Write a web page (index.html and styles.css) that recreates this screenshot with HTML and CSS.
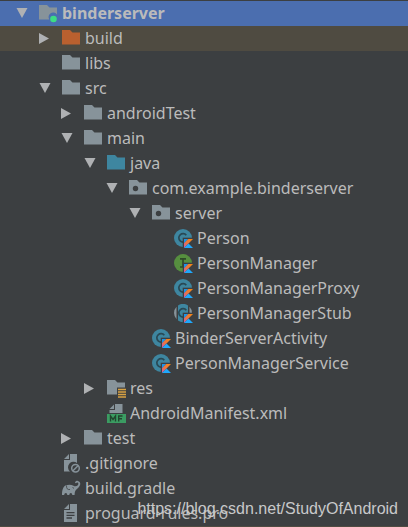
FILE: index.html
```html
<!DOCTYPE html>
<html lang="en">
<head>
    <meta charset="utf-8">
    <title>binderserver</title>
    <meta name="viewport" content="width=device-width, initial-scale=1.0">
    <link rel="stylesheet" href="styles.css">
</head>

<body>
    <!-- Shared icons -->
    <svg class="sprite" aria-hidden="true">
        <defs>
            <linearGradient id="kt-orange" x1="0" y1="1" x2="1" y2="0">
                <stop offset="0" stop-color="#c757bc"/>
                <stop offset="0.4" stop-color="#e8744b"/>
                <stop offset="1" stop-color="#f88909"/>
            </linearGradient>
        </defs>
        <symbol id="down" viewBox="0 0 12 12"><path d="M0.5 0H11.5L6 10Z" fill="#afb1b3"/></symbol>
        <symbol id="right" viewBox="0 0 12 12"><path d="M0 0L10 5.5L0 11Z" fill="#afb1b3"/></symbol>
        <symbol id="folder" viewBox="0 0 19 19"><path d="M0 1H8L10.5 3.5H18V15.5H0Z" fill="currentColor"/></symbol>
        <symbol id="module" viewBox="0 0 19 19">
            <path d="M0 1H8L10.5 3.5H18V10.5A4.5 4.5 0 0 0 10.3 15.5H0Z" fill="currentColor"/>
            <circle cx="14.5" cy="15" r="3.3" fill="#3ddc84"/>
        </symbol>
        <symbol id="package" viewBox="0 0 19 19">
            <path d="M0 1H8L10.5 3.5H18V15.5H0Z" fill="currentColor"/>
            <circle cx="6.5" cy="9.5" r="2.7" fill="#3c3f41"/>
        </symbol>
        <symbol id="resources" viewBox="0 0 19 19">
            <path d="M0 1H8L10.5 3.5H18V8.5H10V15.5H0Z" fill="currentColor"/>
            <path d="M11 10.5H19M11 13H19M11 15.5H19M11 18H19" stroke="#d9a343" stroke-width="1.5"/>
        </symbol>
        <symbol id="kotlin" viewBox="0 0 19 19">
            <path d="M8.7 8.7H19V19H8.7Z" fill="#3c3f41"/>
            <path d="M10 10H14.3L10 14.5Z" fill="#1c93e8"/>
            <path d="M14.3 10H19L10 19V14.3Z" fill="url(#kt-orange)"/>
            <path d="M10 19L14.5 14.5L19 19Z" fill="#20a8fc"/>
        </symbol>
        <symbol id="class" viewBox="0 0 19 19">
            <circle cx="9" cy="9" r="9" fill="#3e86a0"/>
            <path d="M12.3 6.2A4.2 4.2 0 1 0 12.3 11.5" fill="none" stroke="#294955" stroke-width="1.7"/>
            <use href="#kotlin"/>
        </symbol>
        <symbol id="interface" viewBox="0 0 19 19">
            <circle cx="9" cy="9" r="9" fill="#568f3f"/>
            <path d="M6 4.8H12M9 4.8V13M6 13H12" fill="none" stroke="#2f4b29" stroke-width="1.7"/>
            <use href="#kotlin"/>
        </symbol>
        <symbol id="abstract" viewBox="0 0 19 19">
            <path d="M4 1.5A9 9 0 0 1 14 1.5V16.5A9 9 0 0 1 4 16.5Z" fill="#3e86a0"/>
            <path d="M2.5 2.8V15.2A9 9 0 0 1 2.5 2.8ZM15.5 2.8V15.2A9 9 0 0 0 15.5 2.8Z" fill="#87939a"/>
            <path d="M12.3 6.2A4.2 4.2 0 1 0 12.3 11.5" fill="none" stroke="#294955" stroke-width="1.7"/>
            <use href="#kotlin"/>
        </symbol>
        <symbol id="manifest" viewBox="0 0 19 19">
            <path d="M2.5 5L7 0.5V5ZM8 0H15.5V9H2.5V6H8Z" fill="currentColor"/>
            <path d="M0 10H19V19H0Z" fill="#3b9c62"/>
            <path d="M3.5 17.5V12L6 15.5L8.5 12V17.5M11.7 17.5V12H15.5M11.7 14.7H15" fill="none" stroke="#22462f" stroke-width="1.4"/>
        </symbol>
        <symbol id="ignored" viewBox="0 0 19 19">
            <path d="M2 5L7 0V5ZM8 0H15V9A5.5 5.5 0 0 0 8 17.5H2V6H8Z" fill="currentColor"/>
            <circle cx="13.5" cy="14.3" r="3.8" fill="none" stroke="currentColor" stroke-width="1.5"/>
            <path d="M11 16.8L16 11.8" stroke="currentColor" stroke-width="1.5"/>
        </symbol>
        <symbol id="gradle" viewBox="0 0 19 19">
            <path d="M0 16C0 11 1.2 7.5 4 6.3C6.5 5.3 9.5 5.5 11.5 6.8C13 7.7 14.8 7.3 15.8 6.2C16.8 5 16.5 3.5 15.4 3.4C14.7 3.3 14.3 3.8 13.9 4.3L12.9 3.5C13.5 2.3 14.6 1.7 15.8 1.9C17.6 2.2 18.6 3.8 18.2 5.6C17.7 7.9 15.7 9.5 13.9 11C12.9 12 12.7 13.8 12.6 16H10.3C10.2 14.7 9.7 14 8.8 14S7.4 14.7 7.3 16H5.3C5.2 14.7 4.7 14 3.8 14S2.3 14.7 2.2 16Z" fill="currentColor"/>
            <path d="M4.5 6.5C4.3 9.5 5.5 11 8 10.5M10.5 8.5L12 9.3" fill="none" stroke="#3c3f41" stroke-width="0.8"/>
        </symbol>
        <symbol id="text" viewBox="0 0 19 19">
            <path d="M2 5L7 0V5ZM8 0H15V18H2V6H8Z" fill="currentColor"/>
            <path d="M4.5 8.7H12.5M4.5 11.3H12.5M4.5 14H10" stroke="#3c3f41" stroke-width="1.3"/>
        </symbol>
    </svg>

    <!-- Project tree -->
    <ul class="tree">
        <li class="row selected"><button class="toggle" aria-label="Collapse"><svg><use href="#down"/></svg></button><svg class="icon"><use href="#module"/></svg><span>binderserver</span></li>
        <li class="row level1 excluded"><button class="toggle" aria-label="Expand"><svg><use href="#right"/></svg></button><svg class="icon orange"><use href="#folder"/></svg><span>build</span></li>
        <li class="row level1 leaf"><svg class="icon"><use href="#folder"/></svg><span>libs</span></li>
        <li class="row level1"><button class="toggle" aria-label="Collapse"><svg><use href="#down"/></svg></button><svg class="icon"><use href="#folder"/></svg><span>src</span></li>
        <li class="row level2"><button class="toggle" aria-label="Expand"><svg><use href="#right"/></svg></button><svg class="icon"><use href="#folder"/></svg><span>androidTest</span></li>
        <li class="row level2"><button class="toggle" aria-label="Collapse"><svg><use href="#down"/></svg></button><svg class="icon"><use href="#folder"/></svg><span>main</span></li>
        <li class="row level3"><button class="toggle" aria-label="Collapse"><svg><use href="#down"/></svg></button><svg class="icon blue"><use href="#folder"/></svg><span>java</span></li>
        <li class="row level4"><button class="toggle" aria-label="Collapse"><svg><use href="#down"/></svg></button><svg class="icon"><use href="#package"/></svg><span>com.example.binderserver</span></li>
        <li class="row level5"><button class="toggle" aria-label="Collapse"><svg><use href="#down"/></svg></button><svg class="icon"><use href="#package"/></svg><span>server</span></li>
        <li class="row level6 leaf"><svg class="icon"><use href="#class"/></svg><span>Person</span></li>
        <li class="row level6 leaf"><svg class="icon"><use href="#interface"/></svg><span>PersonManager</span></li>
        <li class="row level6 leaf"><svg class="icon"><use href="#class"/></svg><span>PersonManagerProxy</span></li>
        <li class="row level6 leaf"><svg class="icon"><use href="#abstract"/></svg><span>PersonManagerStub</span></li>
        <li class="row level5 leaf"><svg class="icon"><use href="#class"/></svg><span>BinderServerActivity</span></li>
        <li class="row level5 leaf"><svg class="icon"><use href="#class"/></svg><span>PersonManagerService</span></li>
        <li class="row level3"><button class="toggle" aria-label="Expand"><svg><use href="#right"/></svg></button><svg class="icon"><use href="#resources"/></svg><span>res</span></li>
        <li class="row level3 leaf"><svg class="icon"><use href="#manifest"/></svg><span>AndroidManifest.xml</span></li>
        <li class="row level2"><button class="toggle" aria-label="Expand"><svg><use href="#right"/></svg></button><svg class="icon"><use href="#folder"/></svg><span>test</span></li>
        <li class="row level1 leaf"><svg class="icon"><use href="#ignored"/></svg><span>.gitignore</span></li>
        <li class="row level1 leaf"><svg class="icon"><use href="#gradle"/></svg><span>build.gradle</span></li>
        <li class="row level1 leaf"><svg class="icon"><use href="#text"/></svg><span>proguard-rules.pro</span></li>
    </ul>

    <div class="watermark">https://blog.csdn.net/StudyOfAndroid</div>
</body>
</html>
```
FILE: styles.css
```css
:root {
    --panel: #3c3f41;
    --text: #bbbbbb;
    --folder: #87939a;
    --selected: #4b6eaf;
    --excluded: #4f4b41;
}

body {
    position: relative;
    margin: 0;
    background: var(--panel);
    color: var(--text);
    font-family: "Noto Sans", "Open Sans", sans-serif;
    font-size: 16px;
    line-height: 25px;
}

.sprite {
    position: absolute;
    width: 0;
    height: 0;
}

/* Tree rows */
.tree {
    margin: 0;
    padding: 1px 0 0;
    list-style: none;
    border-bottom: 1px solid var(--excluded);
}

.row {
    --indent: 0px;
    display: flex;
    align-items: center;
    height: 25px;
    padding-left: calc(16px + var(--indent));
    white-space: nowrap;
}

.level1 { --indent: 23px; }
.level2 { --indent: 45px; }
.level3 { --indent: 68px; }
.level4 { --indent: 90px; }
.level5 { --indent: 113px; }
.level6 { --indent: 135px; }

/* Rows with no arrow keep its space */
.leaf {
    padding-left: calc(39px + var(--indent));
}

.selected {
    background: var(--selected);
    font-weight: bold;
}

.excluded {
    background: var(--excluded);
}

.toggle {
    width: 12px;
    height: 12px;
    margin-right: 11px;
    padding: 0;
    border: 0;
    background: none;
}

.toggle svg {
    display: block;
    width: 12px;
    height: 12px;
}

.icon {
    flex: none;
    width: 19px;
    height: 19px;
    margin-right: 4px;
    color: var(--folder);
}

.orange { color: #b9602f; }
.blue { color: #3e86a0; }

.watermark {
    position: absolute;
    right: 10px;
    bottom: 8px;
    color: #c8c9ca;
    font-family: "Liberation Sans", Arial, sans-serif;
    font-size: 16px;
    line-height: 20px;
}
```
